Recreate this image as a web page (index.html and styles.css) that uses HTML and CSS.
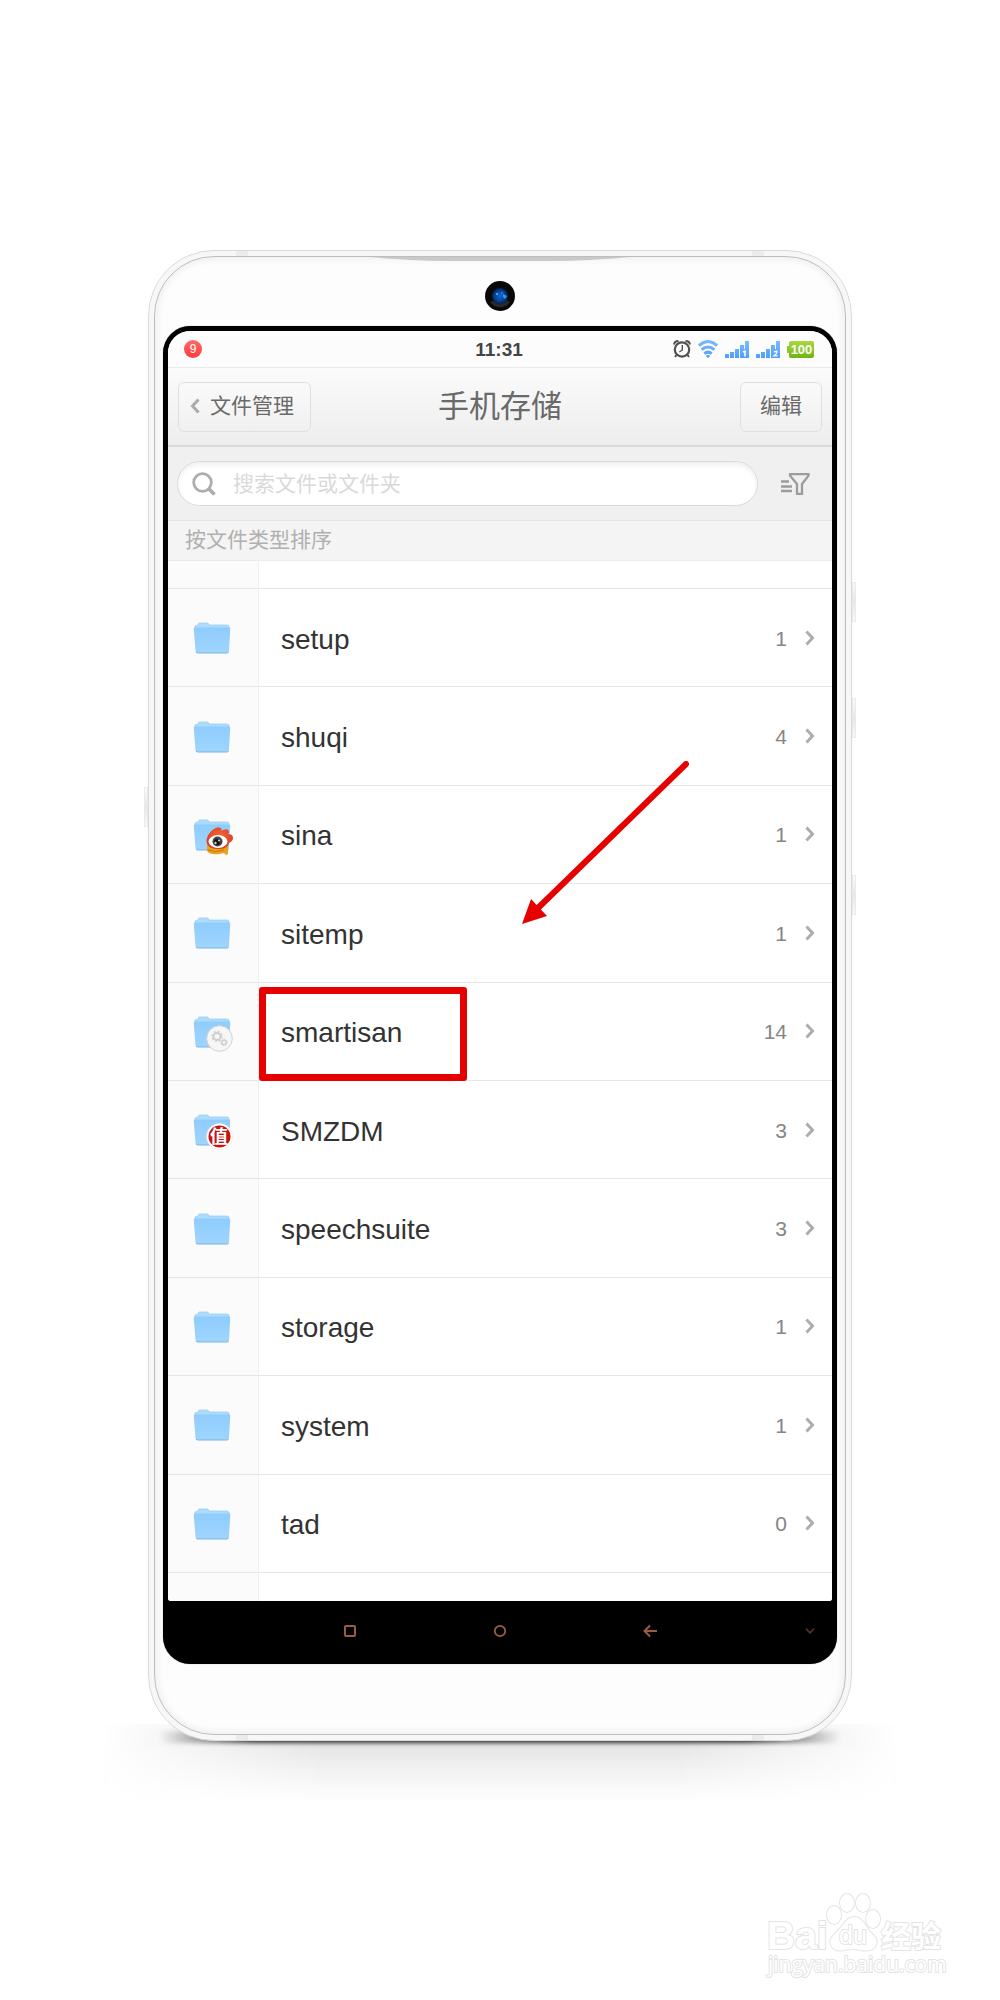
FILE: index.html
```html
<!DOCTYPE html>
<html lang="zh-CN">
<head>
<meta charset="utf-8">
<meta name="viewport" content="width=device-width, initial-scale=1">
<title>手机存储</title>
<link rel="stylesheet" href="styles.css">
</head>
<body>
<svg class="defs" aria-hidden="true">
  <defs>
    <linearGradient id="folder-fill" x1="0" y1="0" x2="0" y2="1">
      <stop offset="0" stop-color="#8fccfd"/><stop offset="1" stop-color="#9fd5fe"/>
    </linearGradient>
    <linearGradient id="sky" gradientUnits="userSpaceOnUse" x1="0" y1="0" x2="0" y2="18">
      <stop offset="0" stop-color="#7cbcff"/><stop offset="1" stop-color="#4b9dfc"/>
    </linearGradient>
    <linearGradient id="leaf" x1="0" y1="0" x2="0" y2="1">
      <stop offset="0" stop-color="#abd93c"/><stop offset="1" stop-color="#6fb411"/>
    </linearGradient>
    <radialGradient id="flame" cx=".5" cy=".4" r=".7">
      <stop offset="0" stop-color="#f4673a"/><stop offset="1" stop-color="#d9331c"/>
    </radialGradient>
    <radialGradient id="lens">
      <stop offset="0" stop-color="#1767c8"/><stop offset=".6" stop-color="#07469c"/><stop offset="1" stop-color="#04204c"/>
    </radialGradient>
    <symbol id="folder" viewBox="0 0 38 32">
      <path d="M2 7V4l3-1 1-2h9l1 2h18l2 1v4z" fill="#abdcfc" stroke="#96caf0" stroke-width=".7"/>
      <path d="M1.500 5.500h35q.8 0 .7 2L36 29q0 2-2 2H4.500q-2 0-2-2L.8 7.500q0-2 .7-2z" fill="url(#folder-fill)"/>
      <path d="M3 30q1 1 2 1h29q1 0 1.500-1" fill="none" stroke="#79b5e2" stroke-width="1"/>
    </symbol>
    <symbol id="chevron" viewBox="0 0 10 16">
      <path d="M1.500 1.500 7.500 8l-6 6.500" fill="none" stroke="#adadad" stroke-width="3"/>
    </symbol>
    <symbol id="bars" viewBox="0 0 24 17">
      <path d="M0 13h4v4H0zM5 11h4v6H5zM10 8h4v9h-4zM15 4h4v4h1V0h4v17h-9z" fill="url(#sky)"/>
    </symbol>
  </defs>
</svg>

<main class="stage">
  <div class="phone">
    <i class="side side-left"></i>
    <i class="side side-power"></i>
    <i class="side side-up"></i>
    <i class="side side-down"></i>
    <i class="seam seam-tl"></i><i class="seam seam-tr"></i><i class="seam seam-bl"></i><i class="seam seam-br"></i>
    <div class="face">
      <div class="forehead">
        <svg viewBox="0 0 270 6" width="270" height="6" aria-hidden="true"><path d="M5 0h260q-40 4-80 4H85Q45 4 5 0z" fill="#c9c9c9"/></svg>
        <svg class="camera" viewBox="0 0 30 30" width="30" height="30" aria-hidden="true">
          <circle cx="15" cy="15" r="15" fill="#080808"/>
          <path d="M5 21a12 12 0 0 0 20 0l-5-3a7 7 0 0 1-9 1z" fill="#292929"/>
          <circle cx="15" cy="15" r="8" fill="url(#lens)"/>
          <circle cx="12" cy="13" r="1" fill="#62b5ff"/><circle cx="17" cy="12" r="1" fill="#2b83e6"/>
          <path d="M18 13l4 2-2 3-2-2z" fill="#269cf5"/>
        </svg>
      </div>
      <div class="glass">
        <section class="screen">
          <div class="status">
            <span class="notice">9</span>
            <time class="clock">11:31</time>
            <div class="signals">
              <svg width="18" height="18" viewBox="0 0 18 18" aria-hidden="true"><g fill="none" stroke="#505050"><circle cx="9" cy="9.500" r="7.200" stroke-width="2.200"/><path d="M9.300 5v5l-3 2" stroke-width="1.400"/><path d="M1 4.500q.5-3.500 4.500-3.500M17 4.500q-.5-3.500-4.500-3.500M3.500 15 2 17M14.500 15l1.500 2" stroke-width="2"/></g></svg>
              <svg width="20" height="18" viewBox="0 0 20 18" aria-hidden="true"><g fill="none" stroke="url(#sky)" stroke-width="3"><path d="M.8 5.500q9.200-8 18.400 0"/><path d="M3.600 9.700q6.400-5.500 12.800 0"/><path d="M6.300 13.600q3.700-3 7.400 0"/></g><path d="M7.800 16q2.200-2 4.400 0L10 18z" fill="#4b9dfc"/></svg>
              <svg width="24" height="17" viewBox="0 0 24 17" aria-hidden="true"><use href="#bars" width="24" height="17"/><path d="M18 11l1.500-.8h.5V15.500" fill="none" stroke="#fff" stroke-width="1.600"/></svg>
              <svg width="24" height="17" viewBox="0 0 24 17" aria-hidden="true"><use href="#bars" width="24" height="17"/><path d="M18 11q3-1.500 3 0t-3 3.800h3.700" fill="none" stroke="#fff" stroke-width="1.300"/></svg>
              <span class="battery">100</span>
            </div>
          </div>
          <header class="titlebar">
            <button class="tool back" type="button"><svg width="10" height="16" viewBox="0 0 10 16" aria-hidden="true"><path d="M8.500 1.500 2.500 8l6 6.500" fill="none" stroke="#ababab" stroke-width="3"/></svg>文件管理</button>
            <h1 class="title">手机存储</h1>
            <button class="tool edit" type="button">编辑</button>
          </header>
          <form class="search">
            <label class="field">
              <svg width="24" height="24" viewBox="0 0 24 24" aria-hidden="true"><circle cx="10.500" cy="10.500" r="8.800" fill="none" stroke="#adadad" stroke-width="2.800"/><path d="m16.500 16.500 6 6" stroke="#adadad" stroke-width="3.600"/></svg>
              <input type="search" placeholder="搜索文件或文件夹" aria-label="搜索文件或文件夹">
            </label>
            <button class="filter" type="button" aria-label="筛选"><svg width="30" height="22" viewBox="0 0 30 22" aria-hidden="true"><path d="M1 8.500h8M1 13.500h11M1 18h11" stroke="#9c9c9c" stroke-width="2.400"/><path d="M10 1.200h18.500v1.500L22 11v9.800h-5V11L10 2.700z" fill="none" stroke="#9c9c9c" stroke-width="2.300"/></svg></button>
          </form>
          <h2 class="sort">按文件类型排序</h2>
          <div class="listing">
            <div class="sliver"></div>
            <ul class="files">
              <li><a class="file" href="#setup"><span class="thumb"><svg class="folder"><use href="#folder"/></svg></span><span class="name">setup</span><span class="count">1</span><svg class="go"><use href="#chevron"/></svg></a></li>
              <li><a class="file" href="#shuqi"><span class="thumb"><svg class="folder"><use href="#folder"/></svg></span><span class="name">shuqi</span><span class="count">4</span><svg class="go"><use href="#chevron"/></svg></a></li>
              <li><a class="file" href="#sina"><span class="thumb"><svg class="folder"><use href="#folder" width="38" height="32"/>
                <path d="M14 25v7q3 4 12 3l5-1 2 2 2-1v-9z" fill="#e9a21c"/><path d="M15 31q7 3 16 0" fill="none" stroke="#c87408" stroke-width="1"/>
                <path d="M13.500 21q1-6 6-10 5-4 8-2 2 1 .5 3 5-3 7-1 2 2 0 4 5 0 5 4 0 3-4 5-1 6-11 6-11.500 0-11.500-9z" fill="url(#flame)"/>
                <ellipse cx="25" cy="22.500" rx="9.500" ry="6.500" fill="#fff"/><circle cx="24.500" cy="22.500" r="5" fill="#444"/><circle cx="24" cy="23" r="3" fill="#111"/><circle cx="22.500" cy="24" r="1.200" fill="#ccc"/><circle cx="26" cy="21.500" r="1" fill="#ddd"/>
              </svg></span><span class="name">sina</span><span class="count">1</span><svg class="go"><use href="#chevron"/></svg></a></li>
              <li><a class="file" href="#sitemp"><span class="thumb"><svg class="folder"><use href="#folder"/></svg></span><span class="name">sitemp</span><span class="count">1</span><svg class="go"><use href="#chevron"/></svg></a></li>
              <li class="marked"><a class="file" href="#smartisan"><span class="thumb"><svg class="folder"><use href="#folder" width="38" height="32"/>
                <circle cx="26.500" cy="22.500" r="12.800" fill="#f6f6f6" stroke="#d2d2d2" stroke-width="1"/>
                <g fill="none" stroke="#cfcfcf"><circle cx="24" cy="20.500" r="3.500" stroke-width="2"/><circle cx="24" cy="20.500" r="5" stroke-width="1.400" stroke-dasharray="1.960 1.967"/><circle cx="31" cy="26.500" r="2.200" stroke-width="1.600"/><circle cx="31" cy="26.500" r="3.200" stroke-width="1" stroke-dasharray="1.260 1.253"/></g>
              </svg></span><span class="name">smartisan</span><span class="count">14</span><svg class="go"><use href="#chevron"/></svg></a></li>
              <li><a class="file" href="#smzdm"><span class="thumb"><svg class="folder"><use href="#folder" width="38" height="32"/>
                <circle cx="26.500" cy="22.500" r="13" fill="#fff" stroke="#e4e4e4" stroke-width=".6"/><circle cx="26.500" cy="22.500" r="11" fill="#c61414"/>
                <text class="zhi" x="26" y="29" text-anchor="middle">值</text>
              </svg></span><span class="name">SMZDM</span><span class="count">3</span><svg class="go"><use href="#chevron"/></svg></a></li>
              <li><a class="file" href="#speechsuite"><span class="thumb"><svg class="folder"><use href="#folder"/></svg></span><span class="name">speechsuite</span><span class="count">3</span><svg class="go"><use href="#chevron"/></svg></a></li>
              <li><a class="file" href="#storage"><span class="thumb"><svg class="folder"><use href="#folder"/></svg></span><span class="name">storage</span><span class="count">1</span><svg class="go"><use href="#chevron"/></svg></a></li>
              <li><a class="file" href="#system"><span class="thumb"><svg class="folder"><use href="#folder"/></svg></span><span class="name">system</span><span class="count">1</span><svg class="go"><use href="#chevron"/></svg></a></li>
              <li><a class="file" href="#tad"><span class="thumb"><svg class="folder"><use href="#folder"/></svg></span><span class="name">tad</span><span class="count">0</span><svg class="go"><use href="#chevron"/></svg></a></li>
            </ul>
            <div class="sliver last"></div>
            <svg class="pointer" viewBox="0 0 168 164" width="168" height="164" aria-hidden="true"><path d="M164 3 16 147" stroke="#e60000" stroke-width="6" stroke-linecap="round"/><path d="M0 163 9 138l16 17z" fill="#e60000"/></svg>
          </div>
        </section>
        <nav class="navbar">
          <button type="button" aria-label="最近任务"><svg width="14" height="14" viewBox="0 0 14 14"><rect x="2" y="2" width="10" height="10" rx="1" fill="none" stroke="#9c5c44" stroke-width="2"/></svg></button>
          <button type="button" aria-label="主页"><svg width="14" height="14" viewBox="0 0 14 14"><circle cx="7" cy="7" r="5.200" fill="none" stroke="#9c5c44" stroke-width="1.800"/></svg></button>
          <button type="button" aria-label="返回"><svg width="14" height="14" viewBox="0 0 14 14"><path d="M14 7H2M7 1.500 1.500 7 7 12.500" fill="none" stroke="#9c5c44" stroke-width="2"/></svg></button>
          <button class="hide" type="button" aria-label="收起"><svg width="10" height="6" viewBox="0 0 10 6"><path d="m1 .8 4 4 4-4" fill="none" stroke="#5e3426" stroke-width="1.600"/></svg></button>
        </nav>
      </div>
    </div>
  </div>
</main>

<footer class="watermark">
  <svg width="184" height="94" viewBox="0 0 184 94" role="img" aria-label="Baidu 经验">
    <g class="outline">
      <text class="logo" x="3" y="56">Bai</text>
      <ellipse cx="70" cy="22" rx="7" ry="9"/><ellipse cx="83" cy="10" rx="7" ry="9"/><ellipse cx="99" cy="10" rx="7" ry="9"/><ellipse cx="109" cy="26" rx="7" ry="9"/>
      <path d="M90 24q-6 0-12 9-5 6-9 10-5 5-1 11 4 5 13 3 8-2 16 0 10 2 14-3 4-6-1-11-5-5-8-10-5-9-12-9z"/>
      <text class="du" x="75" y="51">du</text>
      <text class="jy" x="117" y="54">经验</text>
      <text class="site" x="4" y="79">jingyan.baidu.com</text>
    </g>
  </svg>
</footer>
</body>
</html>
```
FILE: styles.css
```css
*, *::before, *::after { box-sizing: border-box; }

body {
  margin: 0;
  background: #fff;
  color: #333;
  font-family: "Liberation Sans", "Noto Sans CJK SC", sans-serif;
}

button { margin: 0; padding: 0; border: 0; background: none; font: inherit; color: inherit; }
svg { display: block; flex: none; }
.defs { position: absolute; width: 0; height: 0; }

.stage { padding: 250px 148px 0; isolation: isolate; }

/* Handset */
.phone {
  position: relative;
  padding: 5px;
  border: 1px solid #dadada;
  border-radius: 66px;
  background: #f7f7f7;
}
.phone::before {
  content: "";
  position: absolute;
  z-index: -1;
  left: 10px;
  right: 10px;
  bottom: -3px;
  height: 12px;
  background: linear-gradient(90deg, transparent, #333 14%, #333 86%, transparent);
  filter: blur(2px);
}
.phone::after {
  content: "";
  position: absolute;
  z-index: -2;
  left: -50px;
  right: -50px;
  bottom: -60px;
  height: 76px;
  background: linear-gradient(#d6d6d6, #ececec 45%, #fff);
  -webkit-mask-image: linear-gradient(90deg, transparent, #000 28%, #000 72%, transparent);
  mask-image: linear-gradient(90deg, transparent, #000 28%, #000 72%, transparent);
  filter: blur(8px);
}
.face {
  padding: 0 8px 70px;
  border: 1px solid #bebebe;
  border-radius: 60px;
  background: #fdfdfd;
  box-shadow: inset 0 0 10px #e6e6e6;
}
.forehead {
  display: flex;
  flex-direction: column;
  align-items: center;
  height: 69px;
}
.camera { margin-top: 18px; }

.side {
  position: absolute;
  width: 4px;
  height: 40px;
  border: 1px solid #eaeaea;
  background: linear-gradient(#fafafa, #e6e6e6, #fafafa);
}
.side-left { left: -5px; top: 536px; }
.side-power { right: -5px; top: 331px; }
.side-up { right: -5px; top: 447px; }
.side-down { right: -5px; top: 624px; }

.seam { position: absolute; width: 12px; height: 5px; background: #ebebeb; }
.seam-tl { left: 87px; top: 0; }
.seam-tr { right: 87px; top: 0; }
.seam-bl { left: 87px; bottom: 0; }
.seam-br { right: 87px; bottom: 0; }

.glass {
  padding: 5px 5px 0;
  border-radius: 27px;
  background: #000;
  box-shadow: 0 0 1px #777;
}
.screen {
  overflow: hidden;
  border-radius: 22px 22px 3px 3px;
  background: #fff;
}

/* Status bar */
.status {
  display: grid;
  grid-template-columns: 1fr auto 1fr;
  align-items: center;
  height: 37px;
  padding: 0 18px 0 16px;
  border-bottom: 1px solid #e9e9e9;
  background: #fcfcfc;
}
.notice {
  width: 18px;
  height: 18px;
  border-radius: 50%;
  background: linear-gradient(#ff6a66, #fb3b3b);
  color: #fff;
  font-size: 12px;
  line-height: 18px;
  text-align: center;
}
.clock { padding-top: 2px; color: #444; font-size: 19px; font-weight: 700; line-height: 22px; }
.signals { display: flex; justify-content: flex-end; align-items: center; gap: 7px; }
.battery {
  position: relative;
  width: 25px;
  height: 17px;
  margin-left: 2px;
  border-radius: 2px;
  background: linear-gradient(#abd93c, #6fb411);
  color: #fff;
  font-size: 13px;
  font-weight: 700;
  line-height: 17px;
  text-align: center;
}
.battery::before {
  content: "";
  position: absolute;
  left: -2px;
  top: 5px;
  width: 2px;
  height: 7px;
  background: #8ec728;
}

/* Title bar */
.titlebar {
  display: grid;
  grid-template-columns: 1fr auto 1fr;
  align-items: center;
  height: 79px;
  padding: 0 10px;
  border-bottom: 2px solid #d9d9d9;
  background: linear-gradient(#fbfbfb, #ededed);
  color: #6a6a6a;
}
.title { margin: 0; font-size: 31px; font-weight: 400; line-height: 44px; }
.tool {
  display: flex;
  align-items: center;
  gap: 10px;
  height: 50px;
  border: 1px solid #dfdfdf;
  border-radius: 6px;
  background: linear-gradient(#fafafa, #f0f0f0);
  font-size: 21px;
  line-height: 30px;
}
.back { justify-self: start; padding: 0 16px 2px 11px; }
.edit { justify-self: end; padding: 0 19px 2px; }

/* Search */
.search {
  display: flex;
  padding: 14px 0 14px 9px;
  border-bottom: 1px solid #e6e6e6;
  background: #f0f0f0;
}
.field {
  display: flex;
  flex: 1;
  align-items: center;
  gap: 17px;
  height: 45px;
  padding: 0 14px;
  border: 1px solid #dadada;
  border-radius: 23px;
  background: #fff;
  box-shadow: inset 0 3px 4px #f0f0f0;
}
.field input {
  flex: 1;
  min-width: 0;
  padding: 0;
  border: 0;
  outline: 0;
  background: none;
  font: inherit;
  font-size: 21px;
}
.field input::placeholder { color: #d9d9d9; }
.filter { display: grid; place-items: center; width: 74px; }

.sort {
  height: 40px;
  margin: 0;
  padding-left: 17px;
  border-bottom: 1px solid #ebebeb;
  background: #f4f4f4;
  color: #b0b0b0;
  font-size: 21px;
  font-weight: 400;
  line-height: 38px;
}

/* File list */
.listing {
  position: relative;
  background: linear-gradient(90deg, #fbfbfb 90px, #f0f0f0 90px, #f0f0f0 91px, #fff 91px);
}
.sliver { height: 28px; border-bottom: 1px solid #e6e6e6; }
.sliver.last { border-bottom: 0; }
.files {
  display: grid;
  grid-auto-rows: 1fr;
  min-height: 984px;
  margin: 0;
  padding: 0;
  list-style: none;
}
.files li { position: relative; display: grid; border-bottom: 1px solid #e6e6e6; }
.file {
  display: grid;
  grid-template-columns: 91px 1fr auto 10px;
  align-items: center;
  padding-right: 17px;
  color: #333;
  text-decoration: none;
}
.thumb { display: grid; justify-content: center; padding: 1px 3px 0 0; }
.folder { width: 38px; height: 32px; overflow: visible; }
.zhi { fill: #fff; font: 700 18px "Noto Sans CJK SC", sans-serif; }
.name { padding: 4px 0 0 22px; font-size: 28px; line-height: 34px; }
.count { padding: 2px 18px 0 0; color: #858585; font-size: 21px; line-height: 26px; }
.go { width: 10px; height: 16px; }

/* Annotations over the list */
.marked::after {
  content: "";
  position: absolute;
  left: 91px;
  top: 4px;
  width: 208px;
  height: 94px;
  border: 7px solid #e60000;
  border-radius: 3px;
}
.pointer { position: absolute; top: 200px; right: 142px; }

/* Navigation keys */
.navbar {
  position: relative;
  display: flex;
  justify-content: center;
  align-items: center;
  gap: 136px;
  height: 63px;
  padding-bottom: 4px;
}
.hide { position: absolute; right: 17px; top: 27px; }

/* Site mark */
.watermark { display: flex; justify-content: flex-end; padding: 152px 52px 13px 0; }
.outline {
  fill: #fff;
  stroke: #e4e4e4;
  stroke-width: 2px;
  paint-order: stroke;
  font-family: "Liberation Sans", "Noto Sans CJK SC", sans-serif;
}
.logo { font-size: 39px; font-weight: 700; }
.du { font-size: 25px; }
.jy { font: 700 30px "Noto Sans CJK SC", sans-serif; }
.site { font: 400 21px "Open Sans", sans-serif; }
```
